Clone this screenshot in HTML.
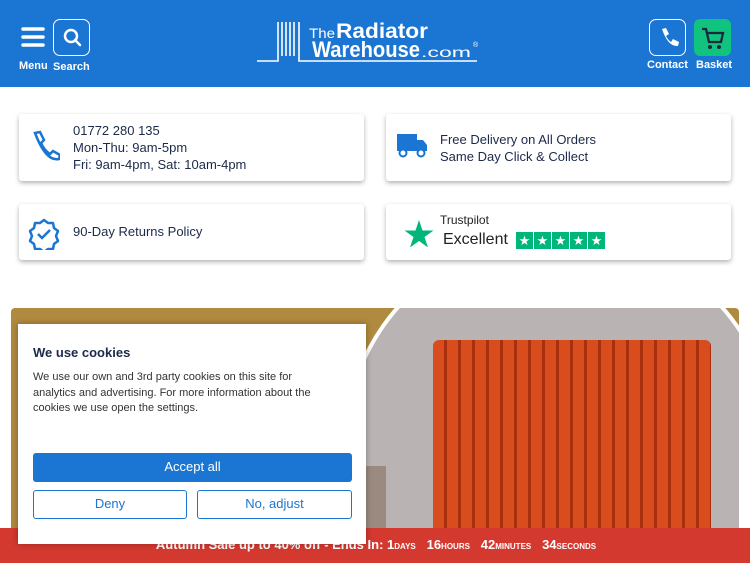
<!DOCTYPE html>
<html><head><style>
*{margin:0;padding:0;box-sizing:border-box}
html,body{width:750px;height:563px;overflow:hidden}
body{background:#fff;font-family:"Liberation Sans",sans-serif;position:relative;color:#1b2a4a}
.hdr{position:absolute;left:0;top:0;width:750px;height:87px;background:#1a76d2}
.lbl{position:absolute;color:#fff;font-size:11px;font-weight:bold}
.box{position:absolute;border:1.5px solid #fff;border-radius:7px;width:37px;height:37px}
.card{position:absolute;background:#fff;border-radius:3px;box-shadow:0 2px 5px rgba(0,0,0,.3);font-size:13px;color:#1b2a4a;line-height:17px}
.btn{position:absolute;border-radius:3px;font-size:13px;text-align:center;line-height:28px}
.st{display:inline-block;width:17px;height:17px;background:#00b67a;color:#fff;font-size:13px;line-height:17px;text-align:center;margin-right:1px}
</style></head><body>
<div class="hdr">
 <svg style="position:absolute;left:21px;top:26px" width="24" height="22"><g stroke="#fff" stroke-width="3.5" stroke-linecap="round"><line x1="2" y1="3" x2="22" y2="3"/><line x1="2" y1="11" x2="22" y2="11"/><line x1="2" y1="19" x2="22" y2="19"/></g></svg>
 <div class="lbl" style="left:19px;top:60px">Menu</div>
 <div class="box" style="left:53px;top:19px"><svg width="37" height="37"><circle cx="17" cy="16" r="6" stroke="#fff" stroke-width="2.5" fill="none"/><line x1="21" y1="20" x2="26" y2="25" stroke="#fff" stroke-width="2.5" stroke-linecap="round"/></svg></div>
 <div class="lbl" style="left:53px;top:61px">Search</div>
 <svg style="position:absolute;left:255px;top:20px" width="230" height="45"><g stroke="#fff" stroke-width="1.6" fill="none"><path d="M2 41 H23 V2 M27 36 V2 M31 36 V2 M35 36 V2 M39 36 V2 M44 2 V41 H222"/></g>
 <text x="54" y="18" fill="#fff" font-size="14" font-family="Liberation Sans" textLength="26" lengthAdjust="spacingAndGlyphs">The</text><text x="81" y="18" fill="#fff" font-size="21" font-weight="bold" font-family="Liberation Sans" textLength="92" lengthAdjust="spacingAndGlyphs">Radiator</text>
 <text x="57" y="37" fill="#fff" font-size="22" font-weight="bold" font-family="Liberation Sans" textLength="108" lengthAdjust="spacingAndGlyphs">Warehouse</text><text x="166" y="37" fill="#fff" font-size="14" font-family="Liberation Sans" textLength="50" lengthAdjust="spacingAndGlyphs">.com</text><text x="218" y="27" fill="#fff" font-size="7">®</text></svg>
 <div class="box" style="left:649px;top:19px"><svg width="37" height="37"><path d="M12 9 l4 -1 l3 6 l-3 2 q2 4 5 6 l2 -3 l6 3 l-1 4 q-10 1 -16 -17z" fill="#fff"/></svg></div>
 <div class="lbl" style="left:647px;top:59px">Contact</div>
 <div style="position:absolute;left:694px;top:19px;width:37px;height:37px;background:#10c47f;border-radius:6px"><svg width="37" height="37"><path d="M8 10 h4 l3 13 h12 l2 -9 h-16" stroke="#1a2a3a" stroke-width="2.3" fill="none"/><circle cx="16" cy="28" r="2" fill="#1a2a3a"/><circle cx="25" cy="28" r="2" fill="#1a2a3a"/></svg></div>
 <div class="lbl" style="left:696px;top:59px">Basket</div>
</div>
<div class="card" style="left:19px;top:114px;width:345px;height:67px">
 <svg style="position:absolute;left:11px;top:16px" width="30" height="32"><path d="M5 3 l5 -1 l4 8 l-3 3 q3 7 9 11 l3 -3 l7 4 l-1 4 q-13 3 -24 -26z" stroke="#1a76d2" stroke-width="2.5" fill="none"/></svg>
 <div style="position:absolute;left:54px;top:8px">01772 280 135<br>Mon-Thu: 9am-5pm<br>Fri: 9am-4pm, Sat: 10am-4pm</div></div>
<div class="card" style="left:386px;top:114px;width:345px;height:67px">
 <svg style="position:absolute;left:9px;top:17px" width="34" height="28"><path d="M2 3 h20 v17 h-20z M22 9 h6 l4 5 v6 h-10z" fill="#1a76d2"/><circle cx="8" cy="22" r="3.5" fill="#fff" stroke="#1a76d2" stroke-width="2"/><circle cx="26" cy="22" r="3.5" fill="#fff" stroke="#1a76d2" stroke-width="2"/></svg>
 <div style="position:absolute;left:54px;top:17px">Free Delivery on All Orders<br>Same Day Click &amp; Collect</div></div>
<div class="card" style="left:19px;top:204px;width:345px;height:56px">
 <svg style="position:absolute;left:9px;top:14px" width="32" height="32"><path d="M16 2 l4 3 5 0 1 5 4 3 -2 5 2 5 -4 3 -1 5 -5 0 -4 3 -4 -3 -5 0 -1 -5 -4 -3 2 -5 -2 -5 4 -3 1 -5 5 0z" stroke="#1a76d2" stroke-width="2.5" fill="none" stroke-linejoin="round"/><path d="M10 16 l4 4 l8 -8" stroke="#1a76d2" stroke-width="2.5" fill="none"/></svg>
 <div style="position:absolute;left:54px;top:19px">90-Day Returns Policy</div></div>
<div class="card" style="left:386px;top:204px;width:345px;height:56px">
 <svg style="position:absolute;left:18px;top:15px" width="30" height="28"><path d="M15 1 l3.5 10.5 h11 l-9 6.5 3.5 10.5 -9 -6.5 -9 6.5 3.5 -10.5 -9 -6.5 h11z" fill="#00b67a"/></svg>
 <div style="position:absolute;left:54px;top:8px;font-size:12px;color:#222">Trustpilot</div>
 <div style="position:absolute;left:57px;top:27px;font-size:16px;color:#222">Excellent</div>
 <div style="position:absolute;left:130px;top:28px;height:17px;white-space:nowrap;font-size:0"><span class="st">★</span><span class="st">★</span><span class="st">★</span><span class="st">★</span><span class="st">★</span></div></div>
<div style="position:absolute;left:11px;top:308px;width:728px;height:255px;background:#b08a3e;border-radius:4px;overflow:hidden">
 <div style="position:absolute;left:331px;top:-76px;width:436px;height:436px;border-radius:50%;background:#b9b4b3;border:4px solid #fff"></div>
 <div style="position:absolute;left:422px;top:32px;width:278px;height:230px;background:repeating-linear-gradient(90deg,#d84c1e 0 11px,#a8300e 11px 14px);border-radius:6px 6px 0 0"></div>
 <div style="position:absolute;left:355px;top:158px;width:20px;height:70px;background:#9a8a80"></div>
</div>
<div style="position:absolute;left:0;top:528px;width:750px;height:35px;background:#d3392f;color:#fff;font-size:13px;font-weight:bold;line-height:33px;text-align:center;padding-left:2px">Autumn Sale up to 40% off - Ends In: 1<small style="font-size:8px">DAYS</small> &nbsp; 16<small style="font-size:8px">HOURS</small> &nbsp; 42<small style="font-size:8px">MINUTES</small> &nbsp; 34<small style="font-size:8px">SECONDS</small></div>
<div style="position:absolute;left:18px;top:324px;width:348px;height:220px;background:#fff;box-shadow:0 0 6px rgba(0,0,0,.3)">
 <div style="position:absolute;left:15px;top:21px;font-size:13px;font-weight:bold;color:#1b2a4a">We use cookies</div>
 <div style="position:absolute;left:15px;top:46px;width:300px;font-size:11px;line-height:15.5px;color:#333">We use our own and 3rd party cookies on this site for analytics and advertising. For more information about the cookies we use open the settings.</div>
 <div class="btn" style="left:15px;top:129px;width:319px;height:29px;background:#1a76d2;color:#fff">Accept all</div>
 <div class="btn" style="left:15px;top:166px;width:154px;height:29px;border:1.5px solid #1a76d2;color:#1a76d2;line-height:26px">Deny</div>
 <div class="btn" style="left:179px;top:166px;width:155px;height:29px;border:1.5px solid #1a76d2;color:#1a76d2;line-height:26px">No, adjust</div>
</div>
</body></html>
